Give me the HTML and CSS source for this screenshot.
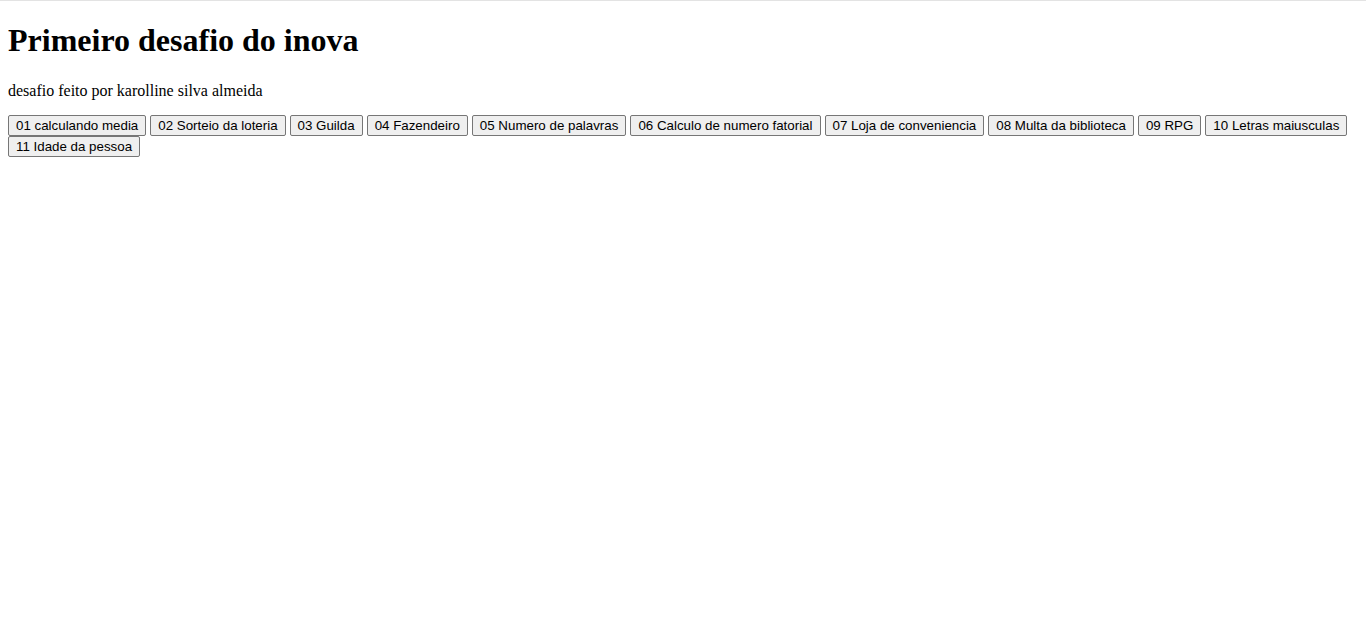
FILE: index.html
```html
<!DOCTYPE html>
<html lang="pt-BR">
<head>
<meta charset="utf-8">
<title>Primeiro desafio do inova</title>
<link rel="stylesheet" href="styles.css">
</head>
<body class="page">
<h1 class="title">Primeiro desafio do inova</h1>
<p class="author">desafio feito por karolline silva almeida</p>
<div class="buttons">
<button class="btn">01 calculando media</button>
<button class="btn">02 Sorteio da loteria</button>
<button class="btn">03 Guilda</button>
<button class="btn">04 Fazendeiro</button>
<button class="btn">05 Numero de palavras</button>
<button class="btn">06 Calculo de numero fatorial</button>
<button class="btn">07 Loja de conveniencia</button>
<button class="btn">08 Multa da biblioteca</button>
<button class="btn">09 RPG</button>
<button class="btn">10 Letras maiusculas</button>
<button class="btn">11 Idade da pessoa</button>
</div>
</body>
</html>
```

FILE: styles.css
```css
html {
  border-top: 1px solid #e3e3e3;
}
.page {
  margin: 8px;
  font-family: "Liberation Serif", "Times New Roman", serif;
  font-size: 16px;
  color: #000;
  background: #fff;
}
.title {
  font-size: 32px;
  font-weight: bold;
  margin: 13px 0 23px;
}
.author {
  margin: 16px 0 15px;
}
.btn {
  font-family: "Liberation Sans", Arial, sans-serif;
  font-size: 13.333px;
  color: #000;
  background: #efefef;
  border: 1px solid #767676;
  border-radius: 2px;
  padding: 2px 7px;
  margin: 0;
}
```
